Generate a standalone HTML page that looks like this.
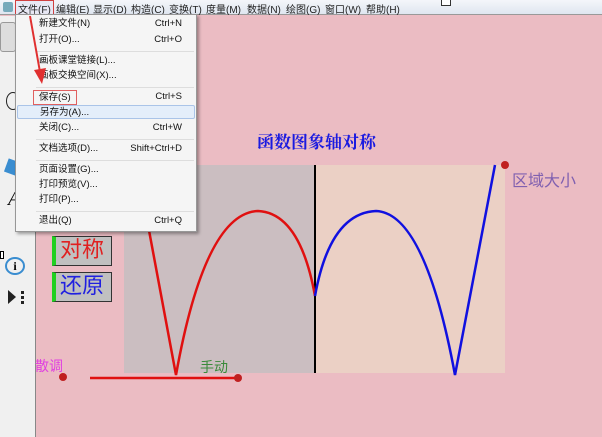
<!DOCTYPE html>
<html><head><meta charset="utf-8"><style>
*{margin:0;padding:0;box-sizing:border-box}
body{width:602px;height:437px;overflow:hidden;position:relative;background:#ebbcc3;font-family:"Liberation Sans","Noto Sans CJK SC",sans-serif;}
.abs{position:absolute}
#menubar{left:0;top:0;width:602px;height:15px;background:linear-gradient(#f4f6fa,#dfe6f0);border-bottom:1px solid #999;font-size:10px;color:#222;}
#menubar span{position:absolute;top:1px;white-space:nowrap}
#tool{left:0;top:16px;width:36px;height:421px;background:#f0f0f0;border-right:1px solid #888}
#menu{left:15px;top:14px;width:182px;height:218px;background:#f5f5f5;border:1px solid #979797;box-shadow:2px 2px 3px rgba(0,0,0,.35);font-size:9.5px;color:#111}
#menu div{position:absolute;left:0;width:180px;height:14px;line-height:14px}
#menu .l{position:absolute;left:23px}
#menu .r{position:absolute;right:14px}
.sep{position:absolute;left:20px;width:158px;height:1px;background:#ddd}
</style></head><body>
<div id="menubar" class="abs">
<span style="left:3px;top:2px;width:10px;height:10px;background:#7ab;border-radius:2px"></span>
<span style="left:15px;top:0;border:1px solid #d04040;padding:0 2px;background:#e8e8f4">文件(F)</span>
<span style="left:56px">编辑(E)</span><span style="left:93px">显示(D)</span><span style="left:131px">构造(C)</span><span style="left:169px">变换(T)</span><span style="left:206px">度量(M)</span><span style="left:247px">数据(N)</span><span style="left:286px">绘图(G)</span><span style="left:325px">窗口(W)</span><span style="left:366px">帮助(H)</span>
<span style="left:441px;top:-2px;width:10px;height:8px;background:#fff;border:1px solid #333"></span>
</div>
<div id="tool" class="abs"></div>
<div class="abs" style="left:0;top:22px;width:16px;height:30px;background:#ddd;border:1px solid #999;border-radius:3px"></div>
<div class="abs" style="left:6px;top:92px;width:14px;height:18px;border:1.5px solid #222;border-radius:50%"></div>
<div class="abs" style="left:6px;top:160px;width:12px;height:14px;background:#3a8dd0;transform:rotate(20deg)"></div>
<div class="abs" style="left:8px;top:188px;font:italic 20px 'Liberation Serif',serif">A</div>
<div class="abs" style="left:5px;top:257px;width:20px;height:18px;border:2px solid #3a8dd0;border-radius:50%;font:bold 12px 'Liberation Serif';text-align:center;line-height:14px">i</div>
<div class="abs" style="left:8px;top:290px;width:0;height:0;border-left:8px solid #222;border-top:7px solid transparent;border-bottom:7px solid transparent"></div>
<div class="abs" style="left:21px;top:291px;width:3px;height:3px;background:#222;box-shadow:0 5px #222,0 10px #222"></div>
<div class="abs" style="left:0;top:251px;width:4px;height:8px;border:1px solid #000;background:#fff"></div>

<div class="abs" style="left:124px;top:165px;width:191px;height:208px;background:#cbbec1"></div>
<div class="abs" style="left:315px;top:165px;width:190px;height:208px;background:#ebd0c5"></div>
<div class="abs" style="left:314px;top:165px;width:2px;height:208px;background:#000"></div>
<div class="abs" style="left:257px;top:128px;font:bold 17px 'Liberation Serif','Noto Serif CJK SC',serif;color:#1a1ae0">函数图象轴对称</div>
<div class="abs" style="left:512px;top:167px;font-size:16px;color:#8060b0">区域大小</div>
<div class="abs" style="left:35px;top:356px;font-size:14px;color:#e040e0">散调</div>
<div class="abs" style="left:200px;top:357px;font-size:14px;color:#3a8a3a">手动</div>
<svg class="abs" style="left:0;top:0" width="602" height="437">
<path d="M148 225 L176 375 Q205 213 258 211 Q300 213 315 296" fill="none" stroke="#e01010" stroke-width="2.5"/>
<path d="M315 296 Q330 213 376 211 Q425 213 455 375 L495 165" fill="none" stroke="#1010e0" stroke-width="2.5"/>
<line x1="90" y1="378" x2="238" y2="378" stroke="#e01010" stroke-width="2.5"/>
<circle cx="63" cy="377" r="4" fill="#c02020"/><circle cx="238" cy="378" r="4" fill="#c02020"/><circle cx="505" cy="165" r="4" fill="#c02020"/>
</svg>
<div class="abs" style="left:52px;top:236px;width:60px;height:30px;background:#c0c0c0;border:1px solid #333;border-left:4px solid #20d020;font-size:22px;color:#e02020;line-height:26px;padding-left:4px">对称</div>
<div class="abs" style="left:52px;top:272px;width:60px;height:30px;background:#c0c0c0;border:1px solid #333;border-left:4px solid #20d020;font-size:22px;color:#2020e0;line-height:26px;padding-left:4px">还原</div>

<div id="menu" class="abs">
<div style="top:2px"><span class="l">新建文件(N)</span><span class="r">Ctrl+N</span></div>
<div style="top:18px"><span class="l">打开(O)...</span><span class="r">Ctrl+O</span></div>
<span class="sep" style="top:36px"></span>
<div style="top:39px"><span class="l">画板课堂链接(L)...</span></div>
<div style="top:54px"><span class="l">画板交换空间(X)...</span></div>
<span class="sep" style="top:72px"></span>
<div style="top:75px"><span class="l" style="left:17px;border:1px solid #e06060;padding:0 5px;height:15px;line-height:13px">保存(S)</span><span class="r">Ctrl+S</span></div>
<div style="top:90px;left:1px;width:178px;background:#e4eefa;border:1px solid #aac4e8;border-radius:2px"><span class="l" style="left:22px">另存为(A)...</span></div>
<div style="top:106px"><span class="l">关闭(C)...</span><span class="r">Ctrl+W</span></div>
<span class="sep" style="top:124px"></span>
<div style="top:127px"><span class="l">文档选项(D)...</span><span class="r">Shift+Ctrl+D</span></div>
<span class="sep" style="top:145px"></span>
<div style="top:148px"><span class="l">页面设置(G)...</span></div>
<div style="top:163px"><span class="l">打印预览(V)...</span></div>
<div style="top:178px"><span class="l">打印(P)...</span></div>
<span class="sep" style="top:196px"></span>
<div style="top:199px"><span class="l">退出(Q)</span><span class="r">Ctrl+Q</span></div>
</div>
<svg class="abs" style="left:0;top:0" width="602" height="437">
<line x1="30" y1="16" x2="40" y2="72" stroke="#e03030" stroke-width="2"/>
<polygon points="34,70 46,68 42,84" fill="#e03030"/>
</svg>
</body></html>
